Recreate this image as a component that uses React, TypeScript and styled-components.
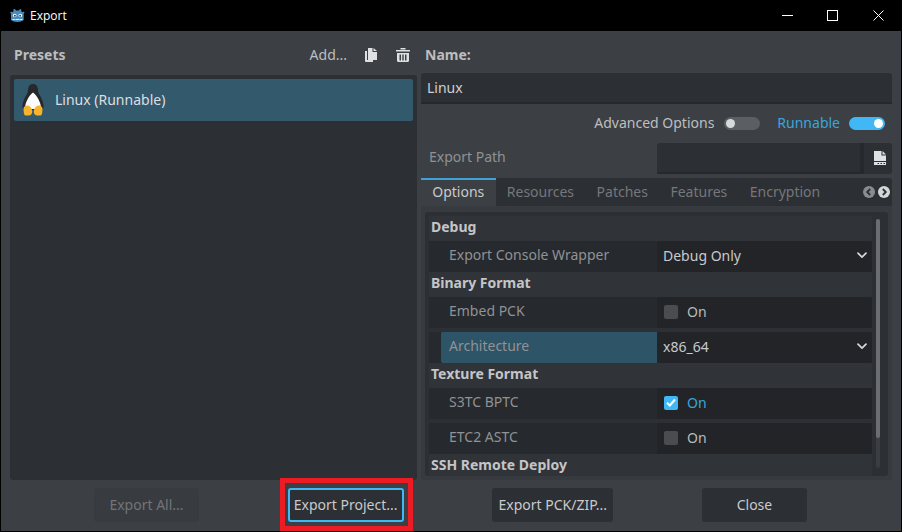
import styled, { createGlobalStyle } from 'styled-components';

const GlobalStyle = createGlobalStyle`
  html, body {
    margin: 0;
    padding: 0;
    background: #000;
  }
  * {
    box-sizing: border-box;
  }
`;

const Window = styled.div`
  width: 902px;
  height: 532px;
  display: flex;
  flex-direction: column;
  border: 1px solid #000;
  border-top: 0;
  background: #3c4045;
  font-family: 'Noto Sans', sans-serif;
  font-size: 14px;
  color: #c9cacc;
  overflow: hidden;
`;

const TitleBar = styled.div`
  height: 31px;
  flex: none;
  display: flex;
  align-items: center;
  padding-left: 9px;
  background: #000;
`;

const TitleText = styled.span`
  margin-left: 5px;
  font-family: 'Open Sans', sans-serif;
  font-size: 12px;
  color: #fff;
`;

const WindowControls = styled.div`
  margin-left: auto;
  display: flex;
`;

const WindowControl = styled.div`
  width: 45.5px;
  height: 31px;
  display: flex;
  align-items: center;
  justify-content: center;
  padding-bottom: 1px;
`;

const Main = styled.div`
  flex: 1;
  min-height: 0;
  display: flex;
  gap: 4px;
  padding: 9px 9px 0;
`;

const LeftColumn = styled.div`
  width: 407px;
  flex: none;
  display: flex;
  flex-direction: column;
`;

const RightColumn = styled.div`
  flex: 1;
  min-width: 0;
  display: flex;
  flex-direction: column;
`;

const HeaderRow = styled.div`
  height: 30px;
  flex: none;
  display: flex;
  align-items: center;
`;

const Heading = styled.span`
  font-weight: 700;
  font-size: 14px;
  color: #bcbdbf;
  margin-left: 4px;
  padding-bottom: 2px;
`;

const AddLabel = styled.span`
  margin-left: auto;
  padding-bottom: 2px;
  color: #bdbec0;
`;

const HeaderIcon = styled.span`
  display: flex;
  margin-left: 18px;
  &:last-child {
    margin-left: 19px;
    margin-right: 7px;
  }
`;

const PresetPanel = styled.div`
  flex: 1;
  margin-top: 5px;
  padding: 4px;
  background: #2c2f34;
  border-radius: 3px;
`;

const PresetItem = styled.div`
  height: 42px;
  display: flex;
  align-items: center;
  gap: 11px;
  padding-left: 8px;
  background: #33596d;
  border-radius: 2px;
  color: #dcdee0;
`;

const PresetName = styled.span`
  padding-bottom: 2px;
`;

const NameInput = styled.div`
  height: 31px;
  flex: none;
  margin-top: 3px;
  display: flex;
  align-items: center;
  padding: 0 6px;
  background: #2c2f34;
  border-bottom: 2px solid #26282c;
  border-radius: 3px 3px 0 0;
  color: #cfd0d2;
`;

const ToggleRow = styled.div`
  height: 30px;
  flex: none;
  margin-top: 4px;
  display: flex;
  align-items: center;
  justify-content: flex-end;
  padding-right: 7px;
`;

const ToggleLabel = styled.span<{ $on?: boolean }>`
  color: ${(p) => (p.$on ? '#3aa5dc' : '#bdbec0')};
  margin-left: 17px;
  padding-bottom: 2px;
`;

const Toggle = styled.span<{ $on?: boolean }>`
  position: relative;
  width: 36px;
  height: 13px;
  margin-left: ${(p) => (p.$on ? '9px' : '10px')};
  border-radius: 7px;
  background: ${(p) => (p.$on ? '#41b8f5' : '#5b5e62')};
  &::after {
    content: '';
    position: absolute;
    top: 2px;
    left: ${(p) => (p.$on ? '25px' : '2px')};
    width: 9px;
    height: 9px;
    border-radius: 50%;
    background: ${(p) => (p.$on ? '#fff' : '#d8d9da')};
  }
`;

const PathRow = styled.div`
  height: 31px;
  flex: none;
  margin-top: 5px;
  display: flex;
  align-items: center;
`;

const PathLabel = styled.span`
  width: 236px;
  padding: 0 0 5px 8px;
  color: #8f9194;
`;

const PathField = styled.div`
  flex: 1;
  height: 31px;
  background: #2c2f34;
  border-bottom: 2px solid #26282c;
  border-radius: 3px 0 0 0;
`;

const PathButton = styled.div`
  width: 32px;
  height: 31px;
  display: flex;
  align-items: center;
  justify-content: center;
  padding: 0 0 1px 4px;
  background: #2c2f34;
  border-left: 4px solid #26282c;
  border-radius: 0 3px 3px 0;
`;

const TabBar = styled.div`
  height: 28px;
  flex: none;
  margin-top: 4px;
  display: flex;
  background: #2c2f34;
  border-radius: 3px 3px 0 0;
`;

const Tab = styled.div<{ $active?: boolean }>`
  height: 28px;
  display: flex;
  align-items: center;
  padding: 0 11.25px 3px;
  color: ${(p) => (p.$active ? '#c9cacc' : '#75777b')};
  background: ${(p) => (p.$active ? '#3c4045' : 'transparent')};
  border-top: 2px solid ${(p) => (p.$active ? '#3fa3d6' : 'transparent')};
`;

const TabArrows = styled.div`
  margin-left: auto;
  display: flex;
  align-items: center;
  gap: 3px;
  padding-right: 2px;
`;

const TabPanel = styled.div`
  flex: 1;
  min-height: 0;
  padding: 6px 4px 4px;
  background: #373b40;
  border-radius: 0 0 3px 3px;
`;

const Inspector = styled.div`
  height: 100%;
  display: flex;
  padding: 4px 0 0 4px;
  background: #2c2f34;
  border-radius: 3px;
  overflow: hidden;
`;

const PropertyList = styled.div`
  flex: 1;
  min-width: 0;
  overflow: hidden;
`;

const Section = styled.div`
  height: 25px;
  display: flex;
  align-items: center;
  padding: 0 2px 5px;
  background: #303338;
  font-weight: 700;
  color: #c4c5c7;
`;

const Property = styled.div<{ $gap?: boolean }>`
  height: 31px;
  display: flex;
  padding-left: 12px;
  margin-top: ${(p) => (p.$gap ? '4px' : '0')};
  background: #26292d;
`;

const PropertyName = styled.div<{ $selected?: boolean }>`
  width: 216px;
  flex: none;
  display: flex;
  align-items: center;
  padding: 0 0 5px 8px;
  color: #909295;
  background: ${(p) => (p.$selected ? '#2e5468' : 'transparent')};
  border-radius: 2px 0 0 2px;
`;

const PropertyValue = styled.div`
  flex: 1;
  display: flex;
  align-items: center;
  justify-content: space-between;
  padding: 0 5px 2px 6px;
  background: #222428;
  border-radius: 2px;
  color: #c9cacc;
`;

const CheckWrap = styled.div<{ $on?: boolean }>`
  display: flex;
  align-items: center;
  gap: 9px;
  padding-left: 1px;
  color: ${(p) => (p.$on ? '#3aa5dc' : '#b9babc')};
`;

const CheckBox = styled.span<{ $on?: boolean }>`
  width: 14px;
  height: 14px;
  display: flex;
  align-items: center;
  justify-content: center;
  border-radius: 2px;
  background: ${(p) => (p.$on ? '#41b8f5' : '#4a4c50')};
`;

const ScrollTrack = styled.div`
  width: 4px;
  height: 249px;
  flex: none;
  margin: 3px 8px 0 4px;
  border-radius: 2px;
  background: #3a3d42;
`;

const ScrollThumb = styled.div`
  height: 219px;
  border-radius: 2px;
  background: #6b6d70;
`;

const Footer = styled.div`
  flex: none;
  display: flex;
  justify-content: space-between;
  margin-top: 8px;
  padding: 0 94px 9px 93px;
`;

const ActionButton = styled.div<{ $disabled?: boolean; $focused?: boolean; $width: number }>`
  position: relative;
  width: ${(p) => p.$width}px;
  height: 34px;
  display: flex;
  align-items: center;
  justify-content: center;
  background: ${(p) => (p.$disabled ? '#383c41' : '#2c2f34')};
  color: ${(p) => (p.$disabled ? '#727477' : '#c9cacc')};
  border-radius: 3px;
  border: ${(p) => (p.$focused ? '2px solid #41b8f5' : '0')};
  padding-bottom: 1px;
`;

const RedMark = styled.span`
  position: absolute;
  top: -12px;
  left: -10px;
  right: -11px;
  bottom: -11px;
  border: 5px solid #ed1c24;
  pointer-events: none;
`;

function GodotIcon() {
  return (
    <svg width="15" height="15" viewBox="0 0 15 15">
      <path
        d="M5 1l1 1.400h3L10 1l1.400.6-.2 1.600 1.300 1 1.200-.7.8 1.300-.8.9V12c-1.500 1.200-3.500 2-6.200 2S2.300 13.200 1 12V5.700l-.8-.9L1 3.500l1.200.7 1.300-1-.2-1.600z"
        fill="#478cbf"
      />
      <circle cx="4.700" cy="7.500" r="1.800" fill="#fff" />
      <circle cx="10.300" cy="7.500" r="1.800" fill="#fff" />
      <circle cx="4.900" cy="7.700" r="1" fill="#414042" />
      <circle cx="10.100" cy="7.700" r="1" fill="#414042" />
      <path d="M2.500 11h2l.6.8L6 11h3l.9.800.6-.8h2v1H2.500z" fill="#fff" opacity="0.85" />
    </svg>
  );
}

function Penguin() {
  return (
    <svg width="22" height="32" viewBox="0 0 22 32">
      <path
        d="M11 0c3.300 0 5 2.700 5 6 0 3 1.500 4.600 3 7.500 1.500 3.300 3 7 2.500 10-.4 2-3 2.500-10.500 2.500S.9 25.500.5 23.500C0 20.500 1.500 16.800 3 13.500 4.500 10.600 6 9 6 6c0-3.300 1.700-6 5-6z"
        fill="#26282b"
      />
      <path d="M11 8.500c2 1.500 3.800 3.500 5.300 6.500 1.700 3.300 3 7 2.700 10H3c-.3-3 1-6.700 2.700-10 1.500-3 3.300-5 5.300-6.500z" fill="#fdfdfd" />
      <path d="M1.500 25c0-2 1.500-3.500 3.500-3.500 2.800 0 5 2.500 5.200 6 .1 2-1 4-3.700 4H3.500c-1 0-1.500-1.500-1.700-3z" fill="#f6b32b" />
      <path d="M20.500 25c0-2-1.500-3.500-3.500-3.500-2.800 0-5 2.500-5.200 6-.1 2 1 4 3.700 4h3c1 0 1.500-1.500 1.700-3z" fill="#f6b32b" />
    </svg>
  );
}

function DuplicateIcon() {
  return (
    <svg width="12" height="14" viewBox="0 0 12 14">
      <path d="M0 3h2v9h6v2H1a1 1 0 0 1-1-1z" fill="#dfe0e1" />
      <path d="M3 0h4.500v4H12v8H3z" fill="#dfe0e1" />
      <path d="M8.500 0L12 3H8.500z" fill="#dfe0e1" />
    </svg>
  );
}

function TrashIcon() {
  return (
    <svg width="14" height="14" viewBox="0 0 14 14">
      <path d="M0 2h14v1.500H0zM4.500 0h5v1.500h-5z" fill="#dfe0e1" />
      <path
        fillRule="evenodd"
        d="M1 5h12v7.500a1.500 1.500 0 0 1-1.500 1.500h-9A1.500 1.500 0 0 1 1 12.500zM3.500 6.500v6H5v-6zM6.300 6.500v6h1.400v-6zM9 6.500v6h1.500v-6z"
        fill="#dfe0e1"
      />
    </svg>
  );
}

function FileIcon() {
  return (
    <svg width="12" height="14" viewBox="0 0 12 14">
      <path d="M0 0h7.500v4.500H12V10H0z" fill="#e0e1e2" />
      <path d="M8.500 0L12 3.500H8.500z" fill="#e0e1e2" />
      <path d="M0 11h12v3H0z" fill="#e0e1e2" />
      <path d="M3.500 12.500H5M6.500 12.500H8M9.500 12.500H11" stroke="#2c2f34" strokeWidth="1" />
    </svg>
  );
}

function Chevron() {
  return (
    <svg width="10" height="7" viewBox="0 0 10 7">
      <path d="M1 1.200l4 4 4-4" fill="none" stroke="#d6d7d8" strokeWidth="1.700" strokeLinecap="round" strokeLinejoin="round" />
    </svg>
  );
}

function TabArrow({ left, color }: { left?: boolean; color: string }) {
  return (
    <svg width="12" height="12" viewBox="0 0 12 12">
      <circle cx="6" cy="6" r="6" fill={color} />
      <path d={left ? 'M7.200 3L4.200 6l3 3' : 'M4.800 3l3 3-3 3'} fill="none" stroke="#2c2f34" strokeWidth="1.800" />
    </svg>
  );
}

function Check() {
  return (
    <svg width="10" height="9" viewBox="0 0 10 9">
      <path d="M1 4.700l2.800 2.800L9 1.500" fill="none" stroke="#fff" strokeWidth="2" />
    </svg>
  );
}

function BoolValue({ on }: { on?: boolean }) {
  return (
    <CheckWrap $on={on}>
      <CheckBox $on={on}>{on && <Check />}</CheckBox>
      On
    </CheckWrap>
  );
}

const TABS = ['Resources', 'Patches', 'Features', 'Encryption'];

export default function App() {
  return (
    <>
      <GlobalStyle />
      <Window>
        <TitleBar>
          <GodotIcon />
          <TitleText>Export</TitleText>
          <WindowControls>
            <WindowControl>
              <svg width="11" height="11" viewBox="0 0 11 11">
                <path d="M0 5.500h11" stroke="#fff" strokeWidth="1" />
              </svg>
            </WindowControl>
            <WindowControl>
              <svg width="11" height="11" viewBox="0 0 11 11">
                <rect x="0.500" y="0.500" width="10" height="10" fill="none" stroke="#fff" />
              </svg>
            </WindowControl>
            <WindowControl>
              <svg width="11" height="11" viewBox="0 0 11 11">
                <path d="M.5.500l10 10M10.500.500l-10 10" stroke="#fff" strokeWidth="1" />
              </svg>
            </WindowControl>
          </WindowControls>
        </TitleBar>

        <Main>
          <LeftColumn>
            <HeaderRow>
              <Heading>Presets</Heading>
              <AddLabel>Add...</AddLabel>
              <HeaderIcon>
                <DuplicateIcon />
              </HeaderIcon>
              <HeaderIcon>
                <TrashIcon />
              </HeaderIcon>
            </HeaderRow>
            <PresetPanel>
              <PresetItem>
                <Penguin />
                <PresetName>Linux (Runnable)</PresetName>
              </PresetItem>
            </PresetPanel>
          </LeftColumn>

          <RightColumn>
            <HeaderRow>
              <Heading>Name:</Heading>
            </HeaderRow>
            <NameInput>Linux</NameInput>
            <ToggleRow>
              <ToggleLabel>Advanced Options</ToggleLabel>
              <Toggle />
              <ToggleLabel $on>Runnable</ToggleLabel>
              <Toggle $on />
            </ToggleRow>
            <PathRow>
              <PathLabel>Export Path</PathLabel>
              <PathField />
              <PathButton>
                <FileIcon />
              </PathButton>
            </PathRow>
            <TabBar>
              <Tab $active>Options</Tab>
              {TABS.map((t) => (
                <Tab key={t}>{t}</Tab>
              ))}
              <TabArrows>
                <TabArrow left color="#8a8c8f" />
                <TabArrow color="#d5d6d7" />
              </TabArrows>
            </TabBar>
            <TabPanel>
              <Inspector>
                <PropertyList>
                  <Section>Debug</Section>
                  <Property>
                    <PropertyName>Export Console Wrapper</PropertyName>
                    <PropertyValue>
                      Debug Only
                      <Chevron />
                    </PropertyValue>
                  </Property>
                  <Section>Binary Format</Section>
                  <Property>
                    <PropertyName>Embed PCK</PropertyName>
                    <PropertyValue>
                      <BoolValue />
                    </PropertyValue>
                  </Property>
                  <Property $gap>
                    <PropertyName $selected>Architecture</PropertyName>
                    <PropertyValue>
                      x86_64
                      <Chevron />
                    </PropertyValue>
                  </Property>
                  <Section>Texture Format</Section>
                  <Property>
                    <PropertyName>S3TC BPTC</PropertyName>
                    <PropertyValue>
                      <BoolValue on />
                    </PropertyValue>
                  </Property>
                  <Property $gap>
                    <PropertyName>ETC2 ASTC</PropertyName>
                    <PropertyValue>
                      <BoolValue />
                    </PropertyValue>
                  </Property>
                  <Section>SSH Remote Deploy</Section>
                </PropertyList>
                <ScrollTrack>
                  <ScrollThumb />
                </ScrollTrack>
              </Inspector>
            </TabPanel>
          </RightColumn>
        </Main>

        <Footer>
          <ActionButton $disabled $width={105}>
            Export All...
          </ActionButton>
          <ActionButton $focused $width={116}>
            Export Project...
            <RedMark />
          </ActionButton>
          <ActionButton $width={121}>Export PCK/ZIP...</ActionButton>
          <ActionButton $width={105}>Close</ActionButton>
        </Footer>
      </Window>
    </>
  );
}
